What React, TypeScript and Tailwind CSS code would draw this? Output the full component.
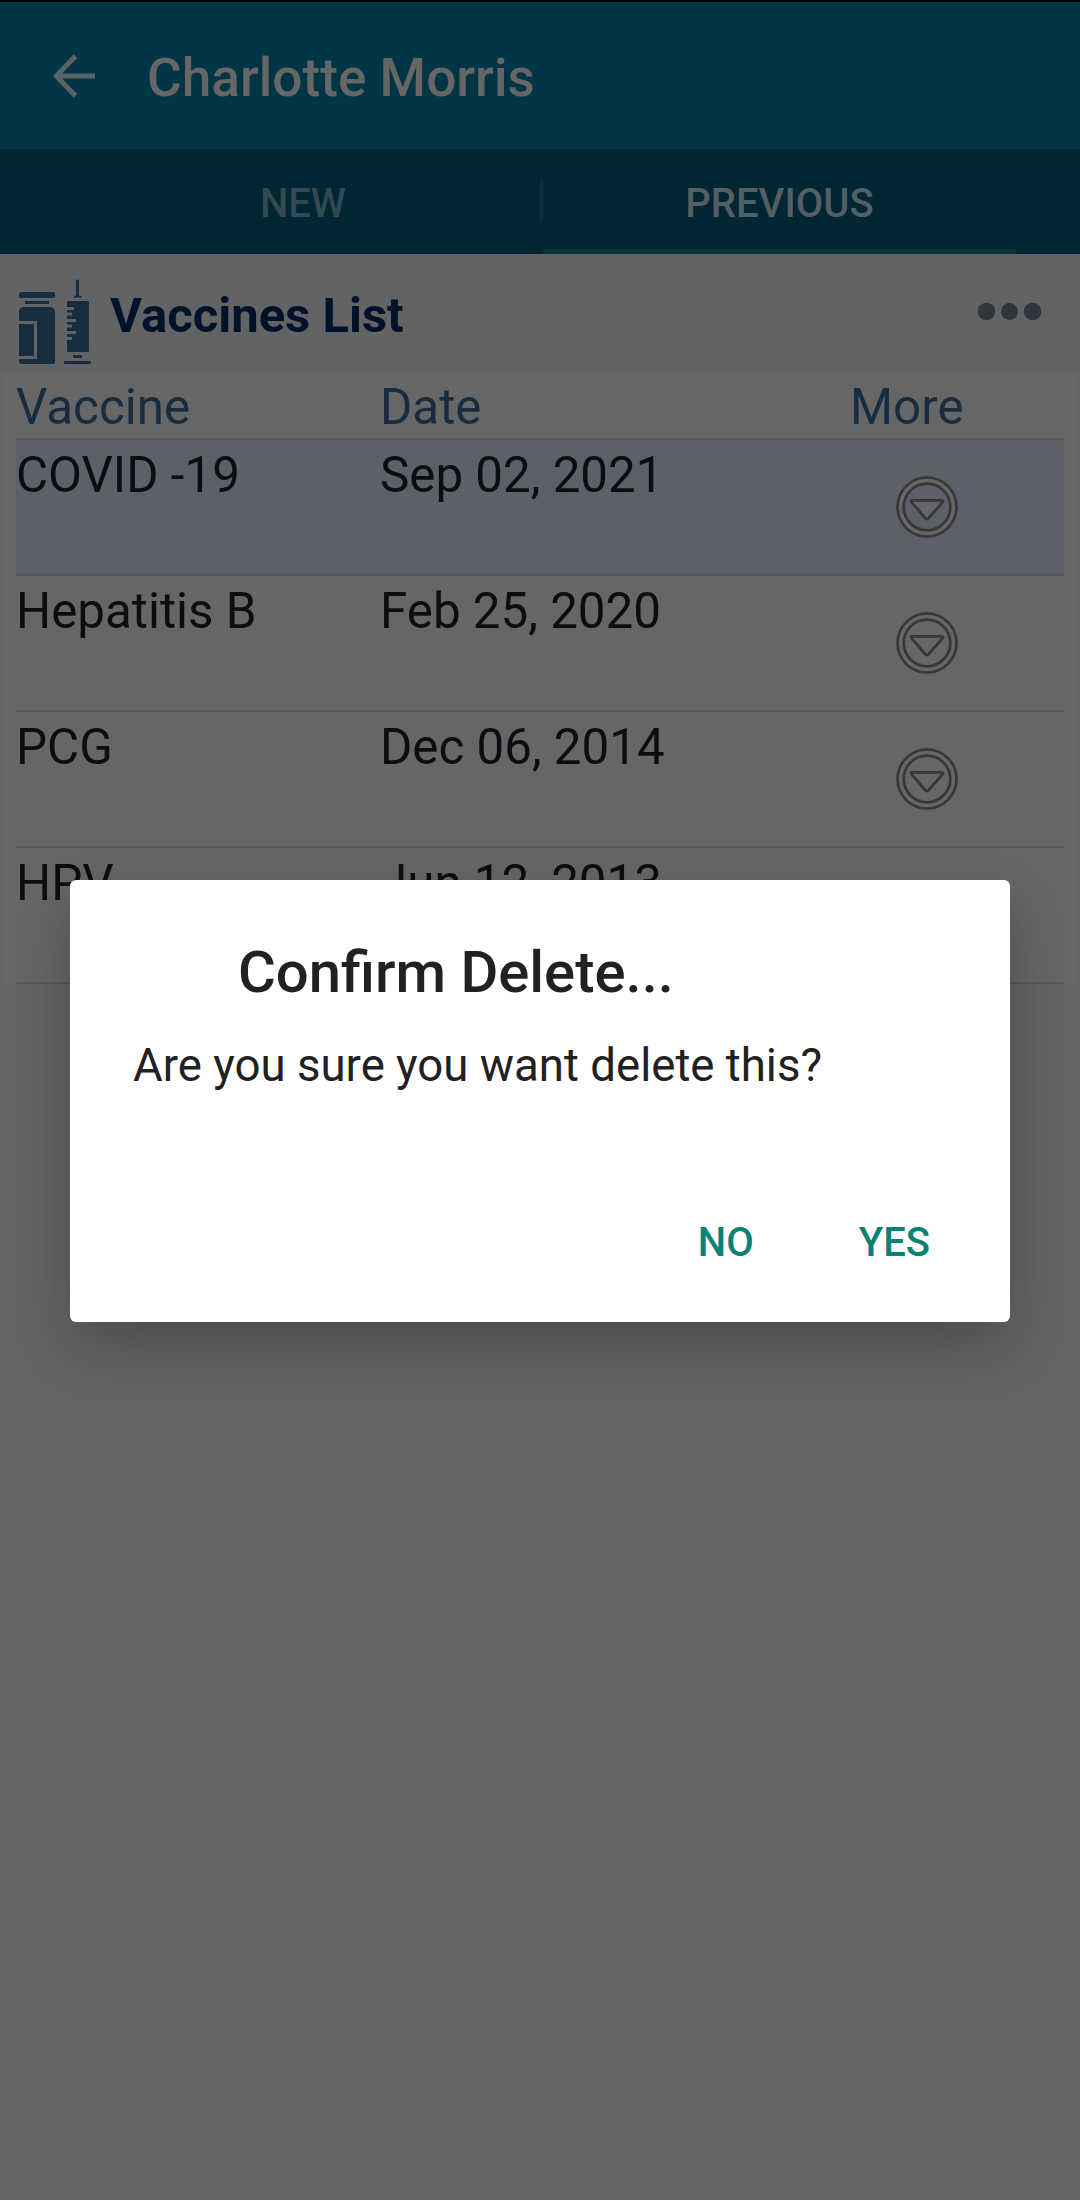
import React from "react";

type VaccineRow = {
  name: string;
  date: string;
  selected?: boolean;
};

const rows: VaccineRow[] = [
  { name: "COVID -19", date: "Sep 02, 2021", selected: true },
  { name: "Hepatitis B", date: "Feb 25, 2020" },
  { name: "PCG", date: "Dec 06, 2014" },
  { name: "HPV", date: "Jun 12, 2013" },
];

const VaccineIcon = () => (
  <svg width="76" height="86" viewBox="0 0 76 86" className="shrink-0" fill="#182c3f">
    {/* Bottle */}
    <rect x="1" y="13" width="36" height="6" rx="2" />
    <rect x="7" y="22" width="24" height="3" rx="0.5" />
    <path d="M5 28h28q4 1 4 5v50q0 2-2 2H3q-2 0-2-2v-3h18V42H1v-9q0-4 4-5z" />
    <rect x="1" y="45" width="15" height="32" />
    {/* Syringe */}
    <path d="M58 1q1.5-1 3 0v15.500q2 0 3 2h-9q1-2 3-2z" />
    <path d="M49 23q0-1 1-1h20q1 0 1 1v49q0 1-1 1H50q-1 0-1-1V61h5v-3h-5v-3h9v-3h-9v-3.500h5v-3h-5V43h9v-3h-9v-3.500h5v-3h-5V31h7v-3h-7z" />
    <rect x="55" y="76" width="9" height="3" />
    <rect x="46" y="82" width="27" height="3" rx="1" />
  </svg>
);

const MoreIcon = () => (
  <svg width="64" height="64" viewBox="0 0 64 64" fill="none" stroke="#373737" strokeWidth="2.7">
    <circle cx="32" cy="32" r="26.500" stroke="#666666" strokeWidth="6" />
    <circle cx="32" cy="32" r="29.500" />
    <circle cx="32" cy="32" r="23.300" />
    <path d="M16.500 25.300h31q1 .5 .3 1.500L33.300 43.500q-1.300 1.200-2.600 0L16.200 26.800q-.7-1 .3-1.500z" fill="#666666" />
  </svg>
);

const Header = () => (
  <header className="flex h-[149px] items-center border-t-2 border-black bg-[#003545] pl-[53px]">
    <svg width="43" height="44" viewBox="0 0 43 44" fill="none" stroke="#5a6468" strokeWidth="5">
      <path d="M42 22H4M22.500 2L3.500 22L22.500 42" />
    </svg>
    <h1 className="mt-[4px] ml-[51px] whitespace-nowrap text-[53.2px] leading-[64px] font-medium text-[#666666]">
      Charlotte Morris
    </h1>
  </header>
);

const Tabs = () => (
  <nav className="flex h-[105px] bg-[#002533] pl-[66px] text-[40px] font-medium">
    <button className="h-full w-[474px] pt-[4px] text-[#33484f]">NEW</button>
    <span className="mt-8 h-[41px] w-[3px] bg-[#0a2f3b]" />
    <button className="h-full w-[473px] border-b-[5px] border-[#003831] pt-[9px] text-[#525f64]">PREVIOUS</button>
  </nav>
);

const ListTitle = () => (
  <div className="flex h-[118px] bg-[#626365] pl-[18px]">
    <div className="mt-[25px]">
      <VaccineIcon />
    </div>
    <h2 className="mt-[32px] ml-[16px] text-[49px] leading-[60px] font-bold text-[#001229]">Vaccines List</h2>
    <svg width="63" height="20" viewBox="0 0 63 20" fill="#31363d" className="mt-[47px] mr-[39px] ml-auto">
      <circle cx="8.500" cy="10.500" r="8.800" />
      <circle cx="31.500" cy="10.500" r="8.500" />
      <circle cx="54.500" cy="10.500" r="8.800" />
    </svg>
  </div>
);

const VaccineTable = () => (
  <div className="mx-[3px] bg-[#666666] px-[13px] text-[49.3px] leading-[58px]">
    <div className="flex h-[68px] items-start border-b-2 border-[#595959] pt-[6px] text-[#182c3f]">
      <span className="w-[364px]">Vaccine</span>
      <span className="w-[470px]">Date</span>
      <span>More</span>
    </div>
    {rows.map((row) => (
      <div
        key={row.name}
        className={`flex h-[136px] items-start border-b-2 border-[#595959] text-[#0c0d11] ${row.selected ? "bg-[#5d6068]" : ""}`}
      >
        <span className="mt-[6px] w-[364px]">{row.name}</span>
        <span className="mt-[6px] w-[515px]">{row.date}</span>
        <span className="mt-[35px]">
          <MoreIcon />
        </span>
      </div>
    ))}
  </div>
);

const ConfirmDialog = () => (
  <div className="absolute top-[880px] left-[70px] flex h-[442px] w-[940px] flex-col rounded-[6px] bg-white text-[#212121] shadow-[0_24px_60px_rgba(0,0,0,0.24)]">
    <h2 className="mt-[57px] ml-[168px] text-[58px] leading-[70px] font-medium">Confirm Delete...</h2>
    <p className="mt-[32px] ml-[63px] text-[45.6px] leading-[54px]">Are you sure you want delete this?</p>
    <div className="mt-auto mr-[80px] mb-[55px] flex justify-end gap-[105px] text-[40px] leading-[48px] font-medium text-[#0b8174]">
      <button>NO</button>
      <button>YES</button>
    </div>
  </div>
);

export default function App() {
  return (
    <div className="relative h-[2200px] w-[1080px] overflow-hidden bg-[#646464] font-['Roboto',sans-serif]">
      <Header />
      <Tabs />
      <ListTitle />
      <VaccineTable />
      <ConfirmDialog />
    </div>
  );
}
